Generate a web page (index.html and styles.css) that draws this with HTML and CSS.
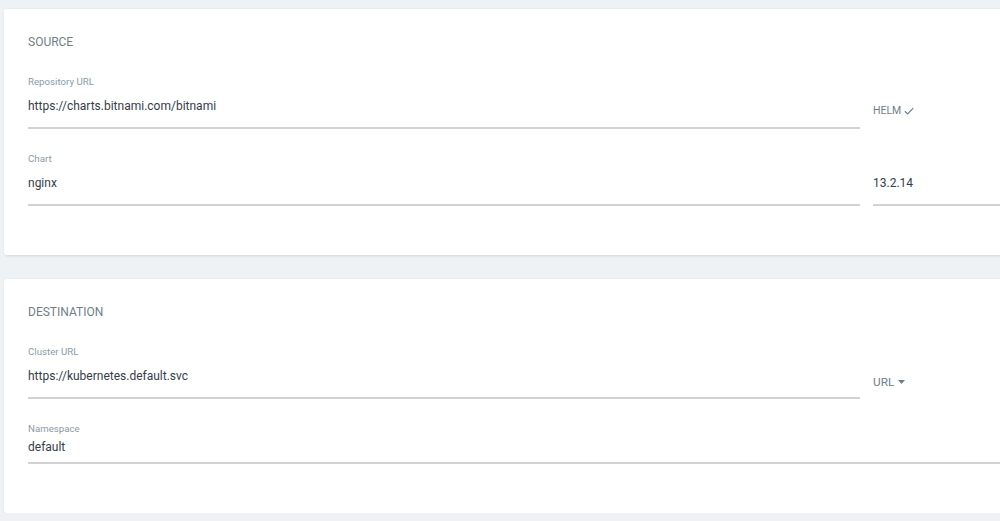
FILE: index.html
```html
<!DOCTYPE html>
<html>
<head>
<meta charset="utf-8">
<link rel="stylesheet" href="styles.css">
</head>
<body>
<main class="page">
  <section class="card">
    <h2 class="card-title">SOURCE</h2>
    <div class="row">
      <div class="field">
        <label class="field-label">Repository URL</label>
        <div class="field-value">https://charts.bitnami.com/bitnami</div>
      </div>
      <div class="side">
        <span class="side-text">HELM</span>
        <svg class="check" viewBox="0 0 10 8" width="10" height="8"><path d="M0.8 4.2 L3.6 6.9 L9.2 1.2" fill="none" stroke="#6d7f8b" stroke-width="1.2"/></svg>
      </div>
    </div>
    <div class="row row-next">
      <div class="field">
        <label class="field-label">Chart</label>
        <div class="field-value">nginx</div>
      </div>
      <div class="field field-side">
        <div class="field-value">13.2.14</div>
      </div>
    </div>
  </section>
  <section class="card card-second">
    <h2 class="card-title">DESTINATION</h2>
    <div class="row">
      <div class="field">
        <label class="field-label">Cluster URL</label>
        <div class="field-value">https://kubernetes.default.svc</div>
      </div>
      <div class="side side-url">
        <span class="side-text side-text-url">URL</span>
        <svg class="caret" viewBox="0 0 7 4" width="7" height="4"><path d="M0 0 H7 L3.5 4 Z" fill="#6d7f8b"/></svg>
      </div>
    </div>
    <div class="field field-compact">
      <label class="field-label">Namespace</label>
      <div class="field-value">default</div>
    </div>
  </section>
</main>
</body>
</html>
```

FILE: styles.css
```css
html, body {
  margin: 0;
  padding: 0;
  background: #eef2f5;
  overflow: hidden;
  font-family: Roboto, "Noto Sans", sans-serif;
}

.page {
  padding: 9px 0 0 4px;
}

.card {
  background: #fff;
  border-radius: 3px 0 0 3px;
  box-shadow: 1px 1px 3px rgba(0, 0, 0, 0.12);
  padding: 24px 0 49px 24px;
}

.card-second {
  margin-top: 24px;
}

.card-title {
  margin: 0 0 24px 0;
  font-size: 12px;
  line-height: 18px;
  font-weight: 400;
  color: #6d7f8b;
}

.row {
  display: grid;
  grid-template-columns: 832px 1fr;
  column-gap: 13px;
}

.row-next {
  margin-top: 23px;
}

.field {
  display: flex;
  flex-direction: column;
  border-bottom: 2px solid #d2d2d2;
  padding-bottom: 11px;
}

.field-label {
  font-size: 9.7px;
  line-height: 14px;
  color: #8a9ba6;
  margin-bottom: 7px;
}

.field-value {
  font-size: 12px;
  line-height: 20px;
  color: #363c4a;
}

.field-side {
  justify-content: flex-end;
}

.side {
  display: flex;
  align-items: center;
  gap: 3px;
  padding-top: 26px;
  height: 20px;
}

.side-url {
  gap: 4px;
  padding-top: 27px;
}

.side-text {
  font-size: 10.5px;
  line-height: 20px;
  color: #6d7f8b;
}

.side-text-url {
  font-size: 11.8px;
}

.check {
  display: block;
}

.caret {
  display: block;
}

.field-compact {
  margin-top: 23px;
  padding-bottom: 5px;
}

.field-compact .field-label {
  margin-bottom: 1px;
}
```
